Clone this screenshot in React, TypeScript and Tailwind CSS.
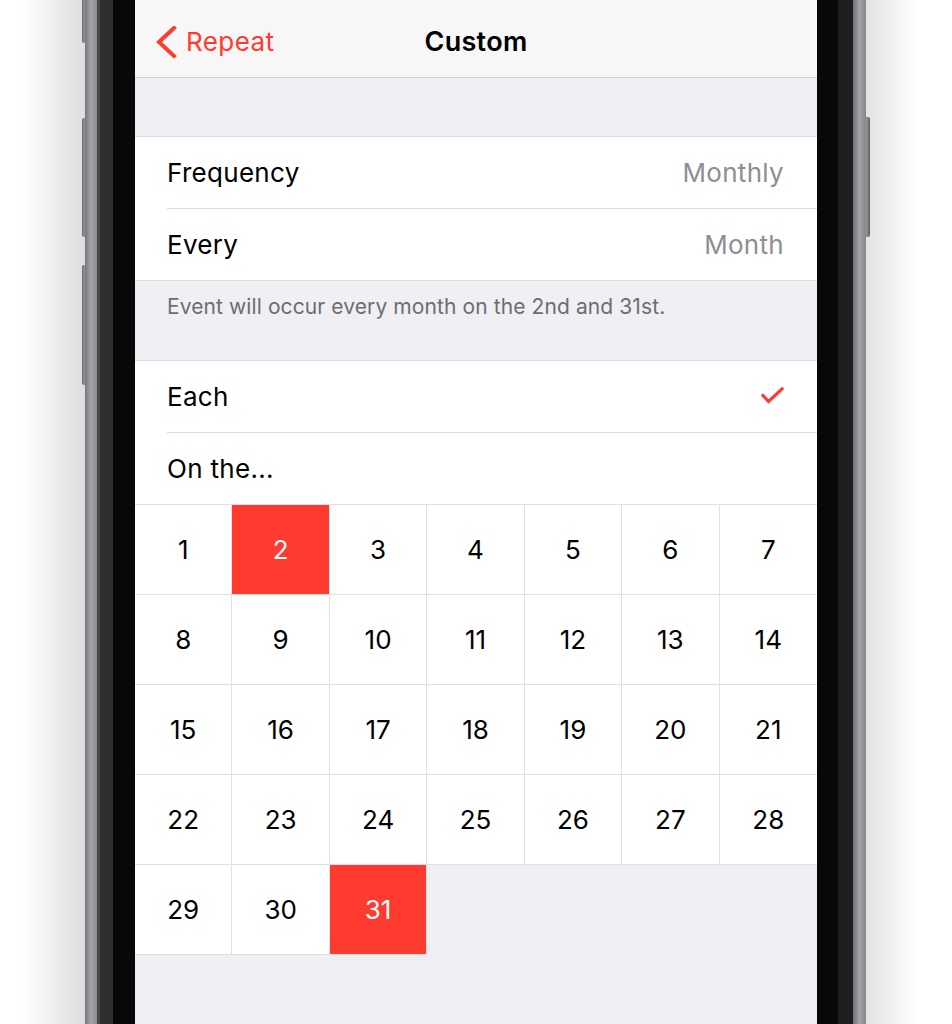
import React from "react";

const days = Array.from({ length: 31 }, (_, i) => i + 1);
const selected = new Set([2, 31]);

function Row({ label, value, check, inset }: { label: string; value?: string; check?: boolean; inset?: boolean }) {
  return (
    <>
      <div className="h-[71px] flex items-center justify-between pl-[32px] pr-[33px] bg-white">
        <span className="text-[26px] tracking-[0.3px] text-black leading-none">{label}</span>
        {value && <span className="text-[26px] tracking-[0.3px] text-[#8e8e93] leading-none">{value}</span>}
        {check && (
          <svg width="24" height="20" viewBox="0 0 24 20" className="mr-[-1px]">
            <polyline points="2,8.5 7.5,14.5 21,2" fill="none" stroke="#ff3b30" strokeWidth="3.2" strokeLinecap="square" strokeLinejoin="miter" />
          </svg>
        )}
      </div>
      {inset && (
        <div className="bg-white">
          <div className="ml-[32px] h-px bg-[#dcdce0]" />
        </div>
      )}
    </>
  );
}

export default function App() {
  return (
    <div className="w-[952px] h-[1024px] flex overflow-hidden bg-white" style={{ fontFamily: "Inter, 'Noto Sans', sans-serif" }}>
      {/* left shadow + buttons */}
      <div className="w-[85px] h-full flex justify-end bg-linear-to-r from-white from-25% to-[#dedede]">
        <div className="w-[3px] h-full flex flex-col">
          <div className="h-[43px] bg-linear-to-r from-[#6a6a6e] to-[#9a9a9f] rounded-bl-[2px]" />
          <div className="h-[75px]" />
          <div className="h-[119px] bg-linear-to-r from-[#6a6a6e] to-[#9a9a9f] rounded-l-[2px]" />
          <div className="h-[28px]" />
          <div className="h-[120px] bg-linear-to-r from-[#6a6a6e] to-[#9a9a9f] rounded-l-[2px]" />
        </div>
      </div>
      {/* left frame */}
      <div className="w-[12px] h-full bg-linear-to-r from-[#77777c] via-[#a4a4a9] to-[#8c8c91]" />
      <div className="w-[3px] h-full bg-[#4a4a4c]" />
      <div className="w-[13px] h-full bg-[#2f2f31]" />
      <div className="w-[22px] h-full bg-[#080808]" />

      {/* screen */}
      <div className="w-[682px] h-full flex flex-col bg-[#efeff4]">
        <div className="h-[78px] bg-[#f7f7f7] border-b border-[#cfcfd3] grid grid-cols-3 items-center pt-[6px]">
          <div className="flex items-center pl-[20px] gap-[9px] text-[#ff3b30]">
            <svg width="22" height="32" viewBox="0 0 22 32">
              <polyline points="19,2 4,16 19,30" fill="none" stroke="#ff3b30" strokeWidth="4" strokeLinecap="square" strokeLinejoin="miter" />
            </svg>
            <span className="text-[26px] tracking-[0.4px] leading-none">Repeat</span>
          </div>
          <div className="text-center text-[27px] tracking-[0.3px] font-semibold leading-none text-black">Custom</div>
          <div />
        </div>

        <div className="h-[58px]" />

        <div className="border-t border-b border-[#dcdce0]">
          <Row label="Frequency" value="Monthly" inset />
          <Row label="Every" value="Month" />
        </div>

        <div className="h-[79px] pl-[32px] pt-[14px]">
          <span className="text-[21px] tracking-[0.1px] text-[#6d6d72] leading-[24px]">Event will occur every month on the 2nd and 31st.</span>
        </div>

        <div className="border-t border-[#dcdce0]">
          <Row label="Each" check inset />
          <Row label="On the..." />
        </div>

        <div className="grid grid-cols-7 border-t border-[#e0e0e3]">
          {days.map((d, i) => {
            const sel = selected.has(d);
            const last = i % 7 === 6;
            return (
              <div
                key={d}
                className={`h-[90px] flex items-center justify-center border-b border-[#e0e0e3] ${last ? "" : "border-r"} ${
                  sel ? "bg-[#ff3b30] text-white" : "bg-white text-black"
                }`}
              >
                <span className="text-[26px] leading-none">{d}</span>
              </div>
            );
          })}
        </div>
        <div className="flex-1" />
      </div>

      {/* right frame */}
      <div className="w-[21px] h-full bg-[#080808]" />
      <div className="w-[15px] h-full bg-[#1f1f20]" />
      <div className="w-[13px] h-full bg-linear-to-r from-[#6f6f74] via-[#a2a2a7] to-[#85858a]" />
      <div className="w-[86px] h-full flex bg-linear-to-r from-[#e2e2e2] to-white to-60%">
        <div className="w-[4px] h-full flex flex-col">
          <div className="h-[117px]" />
          <div className="h-[120px] bg-linear-to-r from-[#9a9a9f] to-[#5e5e62] rounded-r-[2px]" />
        </div>
      </div>
    </div>
  );
}
